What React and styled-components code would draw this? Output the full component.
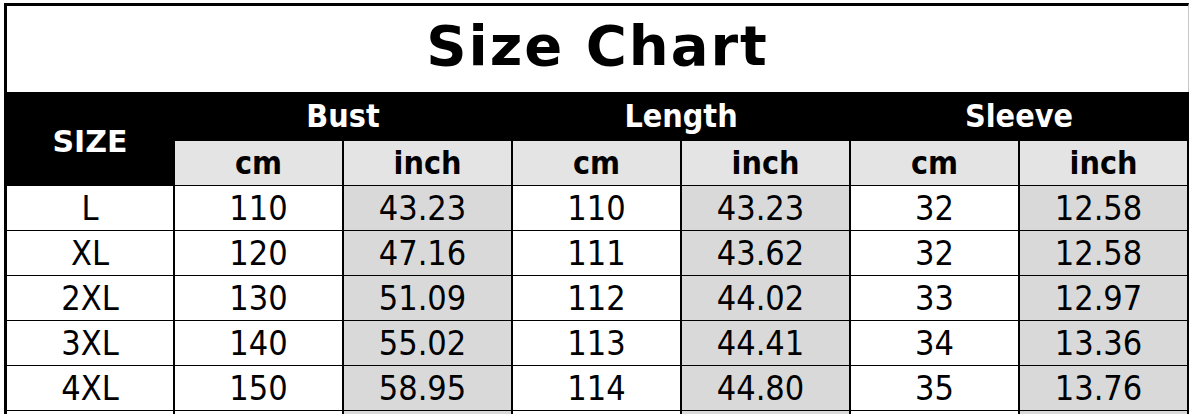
import styled, { createGlobalStyle } from 'styled-components';

const GlobalStyle = createGlobalStyle`
  html, body {
    margin: 0;
    padding: 0;
    background: #ffffff;
  }
  body {
    font-family: "DejaVu Sans Condensed", "DejaVu Sans", sans-serif;
    overflow: hidden;
  }
`;

const groups = ['Bust', 'Length', 'Sleeve'];

const rows = [
  ['L', '110', '43.23', '110', '43.23', '32', '12.58'],
  ['XL', '120', '47.16', '111', '43.62', '32', '12.58'],
  ['2XL', '130', '51.09', '112', '44.02', '33', '12.97'],
  ['3XL', '140', '55.02', '113', '44.41', '34', '13.36'],
  ['4XL', '150', '58.95', '114', '44.80', '35', '13.76'],
  ['', '', '', '', '', '', ''],
];

export default function App() {
  return (
    <>
      <GlobalStyle />
      <Chart>
        <Title>Size Chart</Title>
        <Table>
          <SizeHead>SIZE</SizeHead>
          {groups.map((g) => (
            <GroupHead key={g}>{g}</GroupHead>
          ))}
          {groups.map((g) => (
            <Unit key={g + 'units'}>
              <UnitCell>cm</UnitCell>
              <UnitCell>inch</UnitCell>
            </Unit>
          ))}
          {rows.map((row, i) =>
            row.map((val, j) => (
              <Cell key={i + '-' + j} $shaded={j > 0 && j % 2 === 0}>
                {val}
              </Cell>
            ))
          )}
        </Table>
      </Chart>
    </>
  );
}

const Chart = styled.div`
  margin: 3px 0 0 4px;
  width: 1185px;
`;

const Title = styled.h1`
  margin: 0;
  height: 89px;
  box-sizing: border-box;
  border-top: 3px solid #000;
  border-left: 3px solid #000;
  border-right: 1px solid #c8c8c8;
  display: flex;
  align-items: center;
  justify-content: center;
  font-family: "DejaVu Sans", sans-serif;
  font-weight: 700;
  font-size: 56px;
  letter-spacing: 2px;
  color: #000;
  padding-bottom: 8px;
`;

const Table = styled.div`
  display: grid;
  grid-template-columns: 166px repeat(6, 167px);
  grid-template-rows: 48px 44px repeat(6, 44px);
  column-gap: 2px;
  row-gap: 1px;
  background: #000;
  padding: 0 2px 0 3px;
`;

const SizeHead = styled.div`
  grid-row: 1 / span 2;
  display: flex;
  align-items: center;
  justify-content: center;
  color: #fff;
  font-family: "DejaVu Sans", sans-serif;
  font-weight: 700;
  font-size: 30px;
  padding-top: 5px;
`;

const GroupHead = styled.div`
  grid-column: span 2;
  display: flex;
  align-items: center;
  justify-content: center;
  color: #fff;
  font-weight: 700;
  font-size: 32px;
  padding-bottom: 1px;
`;

const Unit = styled.div`
  grid-column: span 2;
  display: grid;
  grid-template-columns: 167px 167px;
  column-gap: 2px;
`;

const UnitCell = styled.div`
  background: #e4e4e4;
  display: flex;
  align-items: center;
  justify-content: center;
  color: #000;
  font-weight: 700;
  font-size: 32px;
  padding-bottom: 1px;
`;

const Cell = styled.div`
  background: ${(p) => (p.$shaded ? '#d9d9d9' : '#ffffff')};
  display: flex;
  align-items: center;
  justify-content: center;
  color: #000;
  font-size: 34px;
  padding-bottom: 1px;
  padding-right: ${(p) => (p.$shaded ? '10px' : '0')};
`;
